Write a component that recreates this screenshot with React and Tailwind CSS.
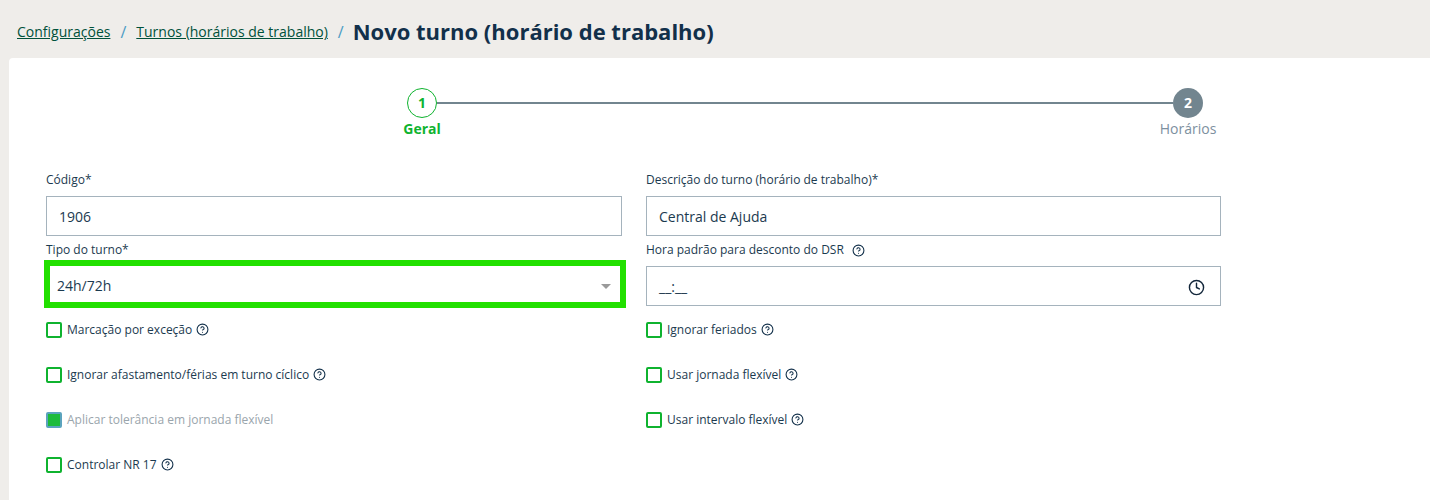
import { CircleHelp, Clock } from "lucide-react";

const Help = ({ className = "" }) => (
  <CircleHelp className={`size-[13px] shrink-0 text-[#12304a] ${className}`} strokeWidth={2} />
);

const Check = ({ label, help = true, disabled = false }) => (
  <div className="flex h-[45px] items-center">
    {disabled ? (
      <span className="size-4 shrink-0 rounded-[2px] border-2 border-[#5ba3bd] bg-[#1dbb3b]" />
    ) : (
      <span className="size-4 shrink-0 rounded-[2px] border-2 border-[#0fb32f] bg-white" />
    )}
    <span className={`ml-[5px] text-xs ${disabled ? "text-[#9aa5ac]" : "text-[#1b3a4f]"}`}>{label}</span>
    {help && <Help className="ml-[4px]" />}
  </div>
);

const Field = ({ label, children }) => (
  <div>
    <div className="mb-[7px] flex h-5 items-center pt-[2px] text-xs text-[#1b3a4f]">{label}</div>
    {children}
  </div>
);

const TextInput = ({ value }) => (
  <div className="flex h-10 items-center border border-[#a5b3bd] bg-white px-3 pt-[2px] text-sm text-[#1b3a4f]">{value}</div>
);

export default function App() {
  return (
    <div className="flex h-[500px] w-[1430px] flex-col overflow-hidden bg-[#efedea] font-['Open_Sans',sans-serif]">
      {/* Breadcrumb */}
      <div className="flex h-[58px] shrink-0 items-center pl-[17px] pt-[6px]">
        <a className="text-sm text-[#00513a] underline">Configurações</a>
        <span className="mx-[10px] text-base text-[#4b9cc4]">/</span>
        <a className="text-sm text-[#00513a] underline">Turnos (horários de trabalho)</a>
        <span className="ml-[10px] mr-[9px] text-base text-[#4b9cc4]">/</span>
        <h1 className="-mt-[1px] text-[22px] font-bold text-[#12304a]">Novo turno (horário de trabalho)</h1>
      </div>

      {/* Card */}
      <div className="ml-[9px] flex-1 rounded-tl-[4px] bg-white pl-[37px] pt-[30px]">
        <div className="w-[1175px]">
          {/* Stepper */}
          <div className="ml-[361px] mr-[18px] flex">
            <div className="flex w-[30px] flex-col items-center">
              <div className="flex size-[30px] items-center justify-center rounded-full border border-[#0fb32f] text-sm font-bold text-[#0fb32f]">1</div>
              <span className="mt-[1px] whitespace-nowrap text-sm font-bold text-[#0fb32f]">Geral</span>
            </div>
            <div className="mt-[14px] h-[2px] flex-1 bg-[#72858f]" />
            <div className="flex w-[30px] flex-col items-center">
              <div className="flex size-[30px] items-center justify-center rounded-full bg-[#72858f] text-sm font-bold text-white">2</div>
              <span className="mt-[1px] whitespace-nowrap text-sm text-[#7d90a0]">Horários</span>
            </div>
          </div>

          {/* Form */}
          <div className="mt-[30px] grid grid-cols-[576px_575px] gap-x-6">
            <div>
              <Field label="Código*">
                <TextInput value="1906" />
              </Field>
              <div className="mt-[3px]">
                <Field label="Tipo do turno*">
                  {/* Highlighted select */}
                  <div className="-mb-[2px] -ml-[2px] -mr-[4px] -mt-[6px] flex h-12 items-center justify-between border-[6px] border-[#22e000] bg-white pl-[7px] pr-[9px] pt-[4px] text-sm text-[#1b3a4f]">
                    24h/72h
                    <span className="h-0 w-0 border-x-[5px] border-t-[5px] border-x-transparent border-t-[#9a9a9a]" />
                  </div>
                </Field>
              </div>
              <div className="mt-[1px]">
                <Check label="Marcação por exceção" />
                <Check label="Ignorar afastamento/férias em turno cíclico" />
                <Check label="Aplicar tolerância em jornada flexível" help={false} disabled />
                <Check label="Controlar NR 17" />
              </div>
            </div>

            <div>
              <Field label="Descrição do turno (horário de trabalho)*">
                <TextInput value="Central de Ajuda" />
              </Field>
              <div className="mt-[3px]">
                <Field
                  label={
                    <>
                      Hora padrão para desconto do DSR
                      <Help className="ml-[8px]" />
                    </>
                  }
                >
                  <div className="flex h-10 items-center justify-between border border-[#a5b3bd] bg-white pl-3 pr-[15px] pt-[2px] text-sm text-[#1b3a4f]">
                    __:__
                    <Clock className="size-[17px] text-[#12263a]" strokeWidth={2} />
                  </div>
                </Field>
              </div>
              <div className="mt-[1px]">
                <Check label="Ignorar feriados" />
                <Check label="Usar jornada flexível" />
                <Check label="Usar intervalo flexível" />
              </div>
            </div>
          </div>
        </div>
      </div>
    </div>
  );
}
